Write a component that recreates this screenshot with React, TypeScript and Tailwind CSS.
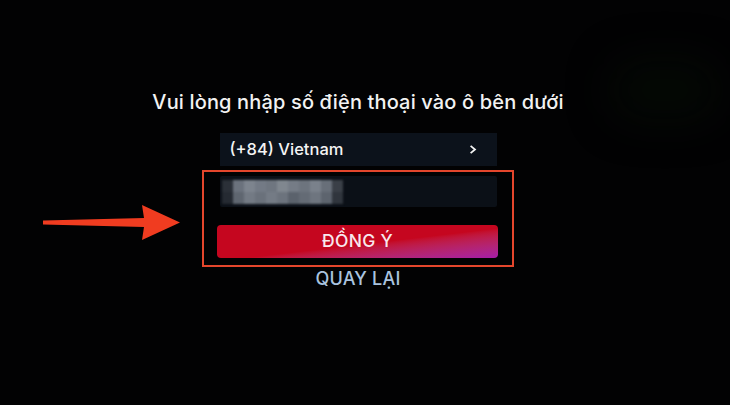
import React from 'react';

// Mosaic used to hide the typed phone number
const MASK_ROWS = [
  ['#2b3038', '#6b727d', '#7d848e', '#737a85', '#6f7680', '#80878f', '#757c86', '#6d747e', '#7a818b', '#686f79', '#3a3f47'],
  ['#252a32', '#5f6670', '#737a84', '#6a717b', '#747b85', '#6c737d', '#5b626c', '#646b75', '#6e757f', '#5d646e', '#30353d'],
];

const Arrow: React.FC = () => (
  <svg viewBox="0 0 145 40" className="w-[145px] h-[40px]">
    <path d="M3 17.5 L104 15 L102 2 L140 19.5 L102 37 L104 24 L3 21.5 Z" fill="#f03c20" />
  </svg>
);

export default function App() {
  return (
    <div
      className="relative w-[730px] h-[405px] bg-[#020203] overflow-hidden"
      style={{ fontFamily: 'Inter, "Open Sans", "Liberation Sans", sans-serif' }}
    >
      {/* faint glow in the top right corner */}
      <div className="absolute right-[10px] top-[60px] w-[110px] h-[60px] rounded-full bg-[#040804] blur-[20px]" />

      <div className="relative flex flex-col items-center pt-[88px] pr-[14px]">
        <h1 className="text-[20px] leading-[28px] text-[#f2f2f2] font-medium tracking-[0.15px]">
          Vui lòng nhập số điện thoại vào ô bên dưới
        </h1>

        {/* country picker */}
        <div className="mt-[17px] w-[277px] h-[33px] bg-[#0c121b] flex items-center justify-between pl-[10px] pr-[20px]">
          <span className="text-[16.5px] text-[#f4f4f4] font-medium">(+84) Vietnam</span>
          <svg viewBox="0 0 10 12" className="w-[8px] h-[11px]">
            <path d="M2 1.5 L7.5 6 L2 10.5" fill="none" stroke="#f4f4f4" strokeWidth="2.2" />
          </svg>
        </div>

        {/* highlighted form block */}
        <div className="mt-[4px] w-[312px] h-[97px] border-2 border-[#e4462c] flex flex-col pl-[13px] pt-[4px]">
          <div className="ml-[3px] w-[277px] h-[31px] bg-[#0b1017] rounded-[2px] flex items-center pl-[2px]">
            <div className="flex flex-col blur-[1px]">
              {MASK_ROWS.map((row, r) => (
                <div key={r} className="flex">
                  {row.map((c, i) => (
                    <div key={i} className="w-[11px] h-[12px]" style={{ backgroundColor: c }} />
                  ))}
                </div>
              ))}
            </div>
          </div>

          <button className="mt-[18px] w-[281px] h-[33px] rounded-[4px] bg-linear-to-br from-[#c5061f] via-[#c5061f] via-55% to-[#a71aa8] text-[17.5px] font-medium text-[#f8e8ee] tracking-[0.3px]">
            ĐỒNG Ý
          </button>
        </div>

        <div className="mt-[1px] text-[18px] leading-[22px] text-[#a9c3df] font-medium tracking-[0.2px]">
          QUAY LẠI
        </div>
      </div>

      {/* callout arrow pointing at the form */}
      <div className="absolute left-[40px] top-[203px]">
        <Arrow />
      </div>
    </div>
  );
}
